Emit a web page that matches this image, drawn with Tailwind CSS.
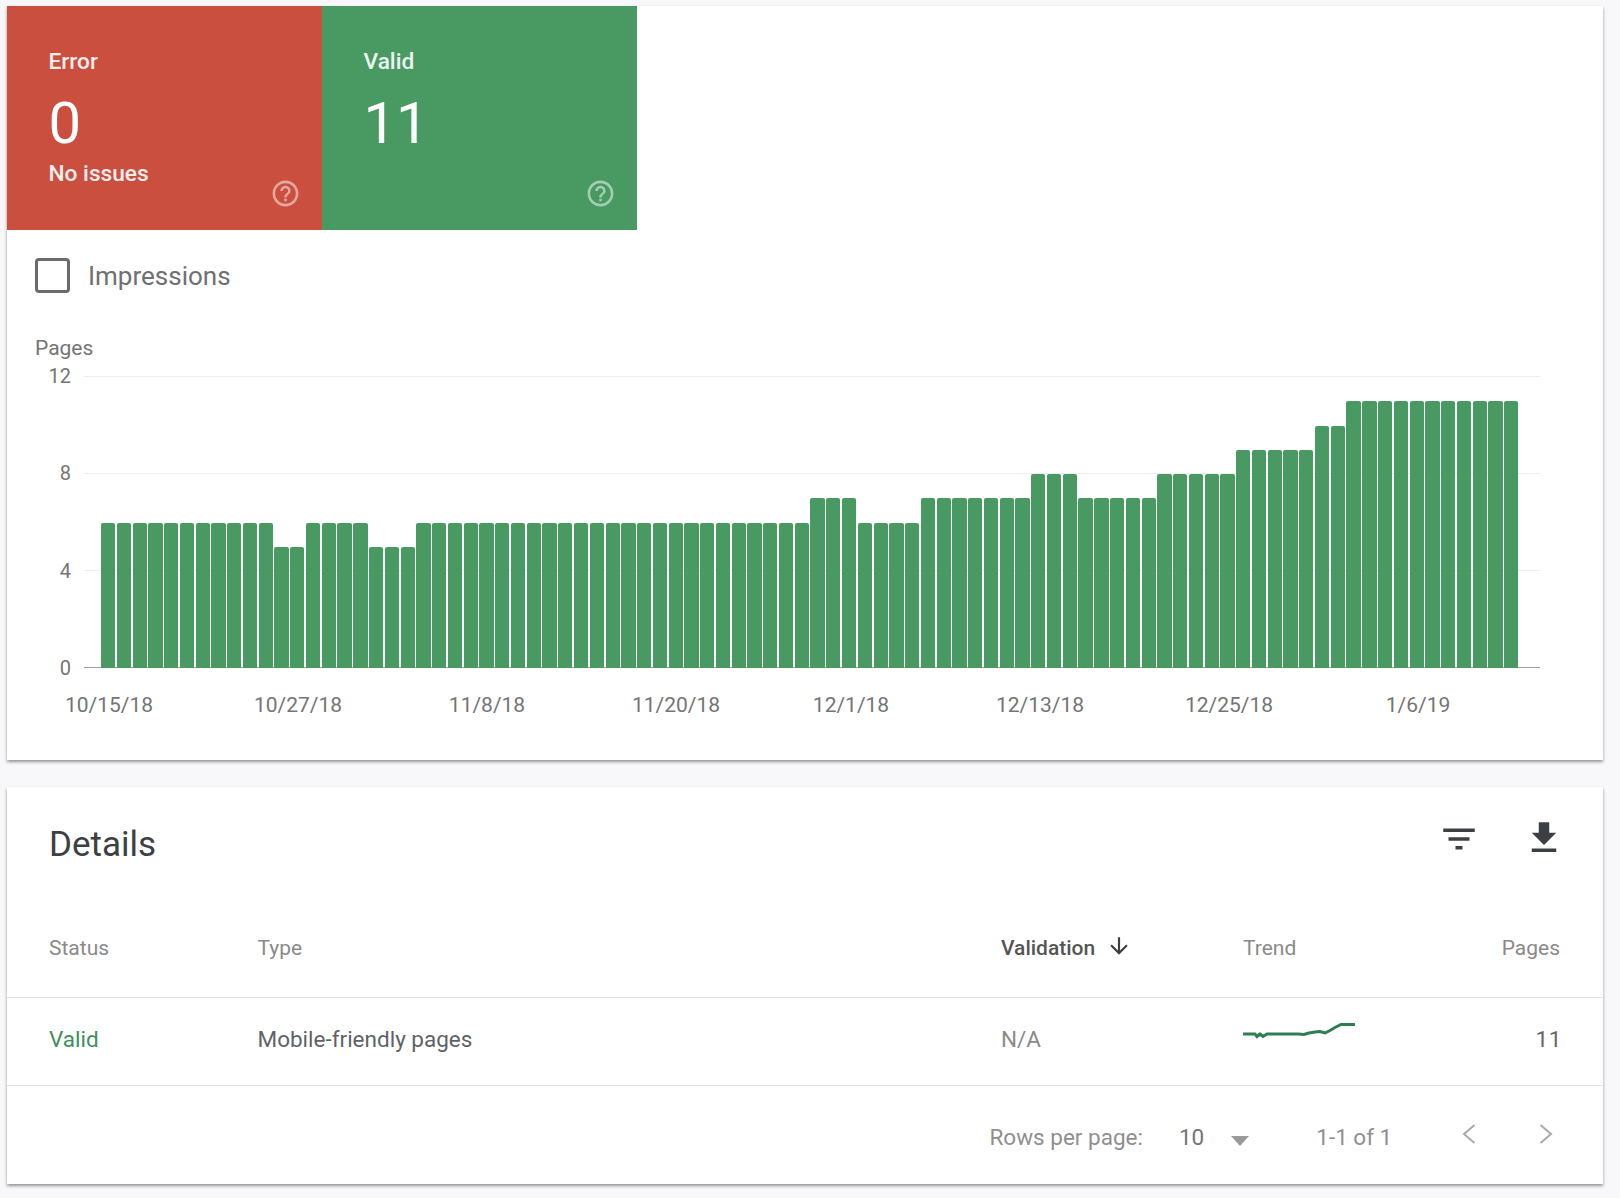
<!DOCTYPE html>
<html lang="en">
<head>
    <meta charset="UTF-8">
    <title>Mobile Usability</title>
    <script src="https://cdn.jsdelivr.net/npm/@tailwindcss/browser@4"></script>
</head>
<body class="bg-[#f8f8fa] font-['Roboto',sans-serif] w-[1620px] h-[1198px] overflow-hidden pl-[7px] pt-[6px]">

    <!-- Summary + chart card -->
    <section class="w-[1596px] h-[754px] bg-white shadow-[0_2px_3px_rgba(0,0,0,0.4)]">
        <div class="flex h-[224px]">
            <div class="relative w-[315px] bg-[#cb4f3f] text-white pl-[41.5px] pt-[41px]">
                <div class="text-[22.7px] leading-[30px] font-medium opacity-90">Error</div>
                <div class="text-[58px] leading-[64px] font-normal mt-[14px]">0</div>
                <div class="text-[22.7px] leading-[30px] font-medium opacity-90 mt-[4px]">No issues</div>
                <svg class="absolute right-[21px] bottom-[21px] w-[31px] h-[31px] fill-white/50" viewBox="0 0 24 24"><path d="M11 18h2v-2h-2v2zm1-16C6.48 2 2 6.48 2 12s4.48 10 10 10 10-4.48 10-10S17.52 2 12 2zm0 18c-4.41 0-8-3.59-8-8s3.59-8 8-8 8 3.59 8 8-3.59 8-8 8zm0-14c-2.21 0-4 1.79-4 4h2c0-1.1.9-2 2-2s2 .9 2 2c0 2-3 1.75-3 5h2c0-2.25 3-2.5 3-5 0-2.21-1.79-4-4-4z"/></svg>
            </div>
            <div class="relative w-[315px] bg-[#499a62] text-white pl-[41.5px] pt-[41px]">
                <div class="text-[22.7px] leading-[30px] font-medium opacity-90">Valid</div>
                <div class="text-[58px] leading-[64px] font-normal mt-[14px]">11</div>
                <svg class="absolute right-[21px] bottom-[21px] w-[31px] h-[31px] fill-white/50" viewBox="0 0 24 24"><path d="M11 18h2v-2h-2v2zm1-16C6.48 2 2 6.48 2 12s4.48 10 10 10 10-4.48 10-10S17.52 2 12 2zm0 18c-4.41 0-8-3.59-8-8s3.59-8 8-8 8 3.59 8 8-3.59 8-8 8zm0-14c-2.21 0-4 1.79-4 4h2c0-1.1.9-2 2-2s2 .9 2 2c0 2-3 1.75-3 5h2c0-2.25 3-2.5 3-5 0-2.21-1.79-4-4-4z"/></svg>
            </div>
        </div>

        <div class="flex items-center gap-[18px] pl-[28px] mt-[28px] h-[35px]">
            <div class="w-[35px] h-[35px] border-[3px] border-[#6b6b6b] rounded-[4px]"></div>
            <span class="text-[26px] text-[#6f7073] mt-[1px]">Impressions</span>
        </div>

        <!-- Chart -->
        <div class="pl-[28px] mt-[43px]">
            <div class="text-[21px] leading-[24px] text-[#757575]">Pages</div>
            <div class="flex mt-[16px]">
                <div class="flex flex-col justify-between w-[36px] h-[292px] text-[20px] leading-[0] text-right text-[#757575]">
                    <span>12</span><span>8</span><span>4</span><span>0</span>
                </div>
                <div class="relative ml-[13px] w-[1456px] h-[292px]">
                    <div class="absolute inset-0 flex flex-col justify-between">
                        <div class="h-px bg-[#eeeeee]"></div>
                        <div class="h-px bg-[#eeeeee]"></div>
                        <div class="h-px bg-[#eeeeee]"></div>
                        <div class="h-px bg-[#9e9e9e]"></div>
                    </div>
                    <div id="bars" class="absolute left-[17px] bottom-0 w-[1417px] h-full flex items-end gap-[1.5px]"></div>
                </div>
            </div>
            <div class="relative h-[24px] mt-[25px] text-[21px] leading-[24px] text-[#757575]">
                <span class="absolute left-[74px] -translate-x-1/2">10/15/18</span>
                <span class="absolute left-[263px] -translate-x-1/2">10/27/18</span>
                <span class="absolute left-[452px] -translate-x-1/2">11/8/18</span>
                <span class="absolute left-[641px] -translate-x-1/2">11/20/18</span>
                <span class="absolute left-[816px] -translate-x-1/2">12/1/18</span>
                <span class="absolute left-[1005px] -translate-x-1/2">12/13/18</span>
                <span class="absolute left-[1194px] -translate-x-1/2">12/25/18</span>
                <span class="absolute left-[1383px] -translate-x-1/2">1/6/19</span>
            </div>
        </div>
    </section>

    <!-- Details card -->
    <section class="w-[1596px] h-[397px] mt-[27px] bg-white shadow-[0_2px_3px_rgba(0,0,0,0.4)]">
        <div class="flex items-center h-[113px] pl-[42px]">
            <h2 class="text-[35px] font-normal text-[#3c4043] flex-1 mt-[3px]">Details</h2>
            <svg class="w-[42px] h-[42px] mt-[-9px] fill-[#3c4043]" viewBox="0 0 24 24"><path d="M10 18h4v-2h-4v2zM3 6v2h18V6H3zm3 7h12v-2H6v2z"/></svg>
            <svg class="w-[42px] h-[42px] mt-[-11px] ml-[43px] mr-[38px] fill-[#3c4043]" viewBox="0 0 24 24"><path d="M19 9h-4V3H9v6H5l7 7 7-7zM5 18v2h14v-2H5z"/></svg>
        </div>

        <div class="grid grid-cols-[208.5px_743.5px_242px_1fr_auto] items-center h-[98px] pl-[42px] pr-[43px] border-b border-[#e2e2e2] text-[21px] text-[#8a8a8a]">
            <span>Status</span>
            <span>Type</span>
            <span class="flex items-center gap-[11px] font-medium text-[#555555]">Validation
                <svg class="w-[26px] h-[26px] mt-[-5px] fill-[#3c4043]" viewBox="0 0 24 24"><path d="M20 12l-1.41-1.41L13 16.17V4h-2v12.17l-5.58-5.59L4 12l8 8 8-8z"/></svg>
            </span>
            <span>Trend</span>
            <span>Pages</span>
        </div>

        <div class="grid grid-cols-[208.5px_743.5px_242px_1fr_auto] items-center h-[88px] pl-[42px] pr-[43px] pb-[4px] border-b border-[#e2e2e2] text-[22.5px]">
            <span class="text-[#3f8f63]">Valid</span>
            <span class="text-[#5f6368]">Mobile-friendly pages</span>
            <span class="text-[#8a8a8a]">N/A</span>
            <svg class="w-[113px] h-[20px] mt-[-18px]" viewBox="0 0 113 20" fill="none" stroke="#2f7d55" stroke-width="3"><path d="M0 13H12L14 15.5 17 13 20 15.5 24 13H55L61 13.5 66 12 72 11 77 10.5 82 12 87 9.5 92 6.5 98 3.5H112"/></svg>
            <span class="text-[#666666] tracking-wide mr-[-2px]">11</span>
        </div>

        <div class="flex items-center h-[98px] pt-[5px] pl-[982.5px] text-[22.5px] text-[#8f8f8f]">
            <span>Rows per page:</span>
            <span class="ml-[36px] text-[#757575]">10</span>
            <span class="ml-[27px] mt-[6px] w-0 h-0 border-x-[9.5px] border-x-transparent border-t-[10px] border-t-[#9a9a9a]"></span>
            <span class="ml-[67px]">1-1 of 1</span>
            <svg class="ml-[70px] w-[14px] h-[20px] mt-[-8px]" viewBox="0 0 14 20" fill="none" stroke="#aaaaaa" stroke-width="2"><path d="M12.5 1L2 10l10.5 9"/></svg>
            <svg class="ml-[63px] w-[14px] h-[20px] mt-[-8px]" viewBox="0 0 14 20" fill="none" stroke="#aaaaaa" stroke-width="2"><path d="M1.5 1L12 10 1.5 19"/></svg>
        </div>
    </section>

    <script>
        // Daily page counts, as [value, number of days]
        const runs = [[6,11],[5,2],[6,4],[5,3],[6,25],[7,3],[6,4],[7,7],[8,3],[7,5],[8,5],[9,5],[10,2],[11,11]];
        const barsEl = document.getElementById('bars');
        runs.forEach(([value, days]) => {
            for (let i = 0; i < days; i++) {
                const bar = document.createElement('div');
                bar.className = 'flex-1 bg-[#499a62] rounded-t-[2px]';
                bar.style.height = (value / 12 * 291) + 'px';
                barsEl.appendChild(bar);
            }
        });
    </script>
</body>
</html>
